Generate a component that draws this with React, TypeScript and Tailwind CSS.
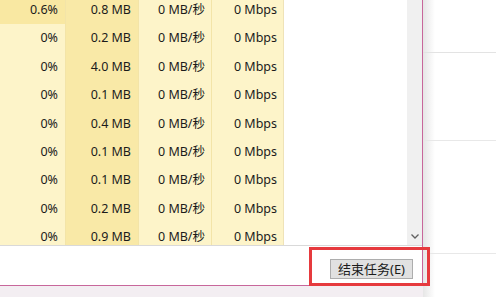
import React from "react";

const rows = [
  ["0.6%", "0.8 MB", "0 MB/秒", "0 Mbps"],
  ["0%", "0.2 MB", "0 MB/秒", "0 Mbps"],
  ["0%", "4.0 MB", "0 MB/秒", "0 Mbps"],
  ["0%", "0.1 MB", "0 MB/秒", "0 Mbps"],
  ["0%", "0.4 MB", "0 MB/秒", "0 Mbps"],
  ["0%", "0.1 MB", "0 MB/秒", "0 Mbps"],
  ["0%", "0.1 MB", "0 MB/秒", "0 Mbps"],
  ["0%", "0.2 MB", "0 MB/秒", "0 Mbps"],
  ["0%", "0.9 MB", "0 MB/秒", "0 Mbps"],
];

const font = { fontFamily: '"Noto Sans", "Noto Sans CJK SC", sans-serif' };

export default function App() {
  return (
    <div
      className="relative flex h-[297px] w-[496px] overflow-hidden bg-white text-[#1b1b1b]"
      style={font}
    >
      {/* window */}
      <div className="flex w-[423px] flex-col">
        <div className="flex w-[423px] flex-col border-r border-r-[#c8679b]">
          <div className="flex h-[245px]">
            {/* table */}
            <div className="flex h-[245px] w-[284px] flex-col overflow-hidden">
              <div className="-mt-[4px] flex flex-col">
                {rows.map((r, i) => (
                  <div key={i} className="flex h-[28.4px] shrink-0 text-[12.5px] leading-none">
                    <div
                      className={`flex w-[66px] items-center justify-end border-r border-r-[#f3e4a8] pr-[7px] ${
                        i === 0 ? "bg-[#f9e8a2]" : "bg-[#fdf4c9]"
                      }`}
                    >
                      {r[0]}
                    </div>
                    <div className="flex w-[73px] items-center justify-end border-r border-r-[#f3e4a8] bg-[#f9e9a7] pr-[7px]">
                      {r[1]}
                    </div>
                    <div className="flex w-[73px] items-center justify-end border-r border-r-[#f3e4a8] bg-[#fdf4c9] pr-[6px]">
                      {r[2]}
                    </div>
                    <div className="flex w-[72px] items-center justify-end border-r border-r-[#efe3b8] bg-[#fdf4c9] pr-[6px]">
                      {r[3]}
                    </div>
                  </div>
                ))}
              </div>
            </div>
            <div className="flex-1" />
            {/* scrollbar */}
            <div className="flex w-[15px] flex-col items-center justify-end bg-[#f0f0f0] pb-[6px]">
              <svg width="8" height="5" viewBox="0 0 8 5">
                <path d="M0.5 0.5 L4 4 L7.5 0.5" fill="none" stroke="#606060" strokeWidth="1.3" />
              </svg>
            </div>
          </div>
          <div className="h-px bg-[#d9d9d9]" />
          <div className="flex h-[39px] items-start justify-end pr-[9px] pt-[13px]">
            <div className="flex h-[20px] w-[83px] items-center justify-center border border-[#adadad] bg-[#e1e1e1] text-[13px] leading-none">
              结束任务(E)
            </div>
          </div>
        </div>
        <div className="h-px w-[423px] bg-[#c8679b]" />
        <div className="flex-1 bg-[#f3eef2]" />
      </div>
      {/* right side */}
      <div className="relative flex-1 bg-white">
        <div className="absolute left-0 top-0 h-full w-[12px] bg-gradient-to-r from-[#e6e6e6] to-white" />
        <div className="absolute left-0 right-0 top-[52px] h-px bg-[#e3e3e3]" />
        <div className="absolute left-0 right-0 top-[140px] h-px bg-[#e8e8e8]" />
        <div className="absolute left-0 right-0 top-[253px] h-px bg-[#e8e8e8]" />
      </div>
      {/* red highlight box */}
      <div className="absolute left-[309px] top-[247px] h-[39px] w-[121px] border-[3px] border-[#e63a3e]" />
    </div>
  );
}
